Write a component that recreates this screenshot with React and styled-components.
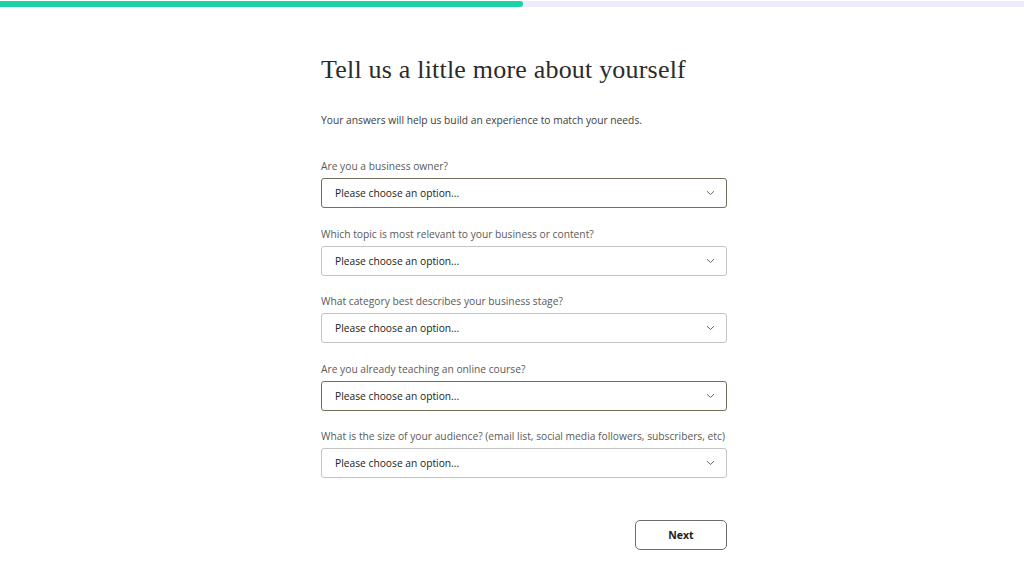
import * as React from "react";
import styled, { createGlobalStyle } from 'styled-components';

const QUESTIONS = [
    { label: 'Are you a business owner?', strong: true },
    { label: 'Which topic is most relevant to your business or content?' },
    { label: 'What category best describes your business stage?' },
    { label: 'Are you already teaching an online course?', strong: true },
    { label: 'What is the size of your audience? (email list, social media followers, subscribers, etc)' },
]

const Global = createGlobalStyle`
    html, body { margin: 0; padding: 0; background: #fff; }
    body { font-family: "Open Sans", "Noto Sans", sans-serif; }
`;

const Progress = styled.div`
    height: 6px;
    margin-top: 1px;
    background: #ececfb;
`;

const Fill = styled.div`
    height: 100%;
    background: #1ad3a6;
    border-radius: 0 4px 4px 0;
`;

const Page = styled.main`
    display: flex;
    justify-content: center;
    padding: 43px 0 0 24px;
`;

const Form = styled.div`
    width: 406px;
    display: flex;
    flex-direction: column;
`;

const Title = styled.h1`
    margin: 0;
    font-family: "Liberation Serif", "DejaVu Serif", serif;
    font-weight: 400;
    font-size: 26px;
    line-height: 40px;
    color: #2b2b2b;
    letter-spacing: 0.2px;
`;

const Intro = styled.p`
    margin: 22px 0 30px;
    font-size: 10.25px;
    line-height: 16px;
    color: #3d3d3d;
`;

const Field = styled.div`
    display: flex;
    flex-direction: column;
    margin-bottom: 17.5px;
`;

const Label = styled.label`
    font-size: 10.25px;
    line-height: 16px;
    color: #5a5a5a;
    margin-bottom: 4px;
    white-space: nowrap;
`;

const Select = styled.div`
    height: 30px;
    box-sizing: border-box;
    border: 1px solid ${p => p.strong ? '#74705c' : '#c4c4c4'};
    border-radius: 3px;
    display: flex;
    align-items: center;
    justify-content: space-between;
    padding: 0 11px 0 13px;
    font-size: 10.25px;
    color: #222;
`;

const Chevron = () => (
    <svg width="9" height="6" viewBox="0 0 9 6">
        <path d="M1 1.2 L4.5 4.5 L8 1.2" fill="none" stroke="#666" strokeWidth="1" />
    </svg>
)

const Footer = styled.div`
    display: flex;
    justify-content: flex-end;
    margin-top: 24.5px;
`;

const Next = styled.button`
    width: 92px;
    height: 30px;
    border: 1px solid #6d6d6d;
    border-radius: 5px;
    background: #fff;
    font-family: inherit;
    font-size: 10.5px;
    font-weight: 700;
    color: #222;
`;

const App = () => {
    return (
        <>
            <Global />
            <Progress><Fill style={{ width: '523px' }} /></Progress>
            <Page>
                <Form>
                    <Title>Tell us a little more about yourself</Title>
                    <Intro>Your answers will help us build an experience to match your needs.</Intro>
                    {QUESTIONS.map(q => (
                        <Field key={q.label}>
                            <Label>{q.label}</Label>
                            <Select strong={q.strong}>
                                <span>Please choose an option...</span>
                                <Chevron />
                            </Select>
                        </Field>
                    ))}
                    <Footer><Next>Next</Next></Footer>
                </Form>
            </Page>
        </>
    )
}
export default App;
